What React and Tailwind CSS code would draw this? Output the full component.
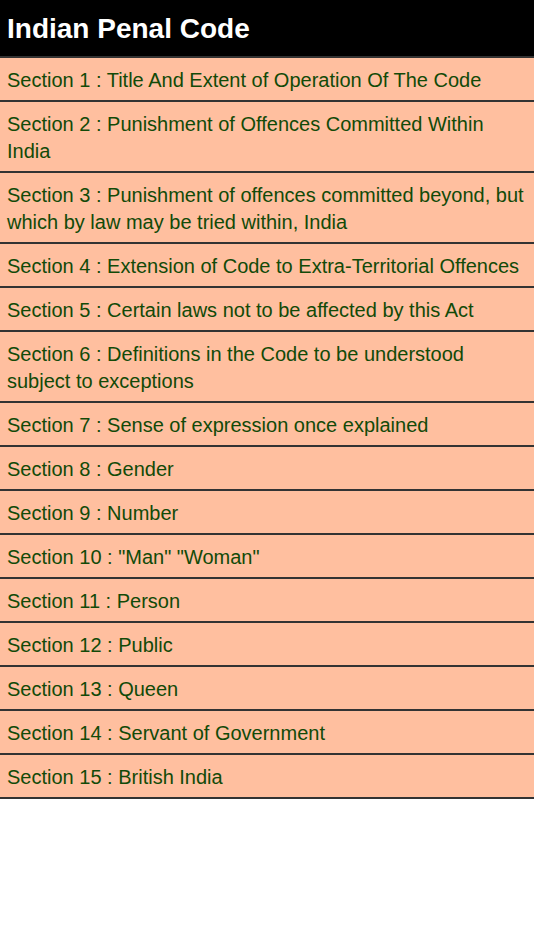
import React from "react";

const sections = [
  "Section 1 : Title And Extent of Operation Of The Code",
  "Section 2 : Punishment of Offences Committed Within India",
  "Section 3 : Punishment of offences committed beyond, but which by law may be tried within, India",
  "Section 4 : Extension of Code to Extra-Territorial Offences",
  "Section 5 : Certain laws not to be affected by this Act",
  "Section 6 : Definitions in the Code to be understood subject to exceptions",
  "Section 7 : Sense of expression once explained",
  "Section 8 : Gender",
  "Section 9 : Number",
  'Section 10 : "Man" "Woman"',
  "Section 11 : Person",
  "Section 12 : Public",
  "Section 13 : Queen",
  "Section 14 : Servant of Government",
  "Section 15 : British India",
];

export default function App() {
  return (
    <div className="w-[534px] min-h-[950px] bg-white font-['Liberation_Sans',Arial,sans-serif]">
      <div className="h-[58px] bg-black border-b-[2px] border-[#333333] flex items-center pl-[7px] pt-[2px]">
        <h1 className="text-[28px] font-bold text-white leading-none">Indian Penal Code</h1>
      </div>
      <ul>
        {sections.map((s) => (
          <li
            key={s}
            className="bg-[#ffbf9f] border-b-[2px] border-[#333333] pl-[7px] pr-[6px] pt-[9px] pb-[6px] text-[20px] leading-[27px] text-[#124a08]"
          >
            {s}
          </li>
        ))}
      </ul>
    </div>
  );
}
